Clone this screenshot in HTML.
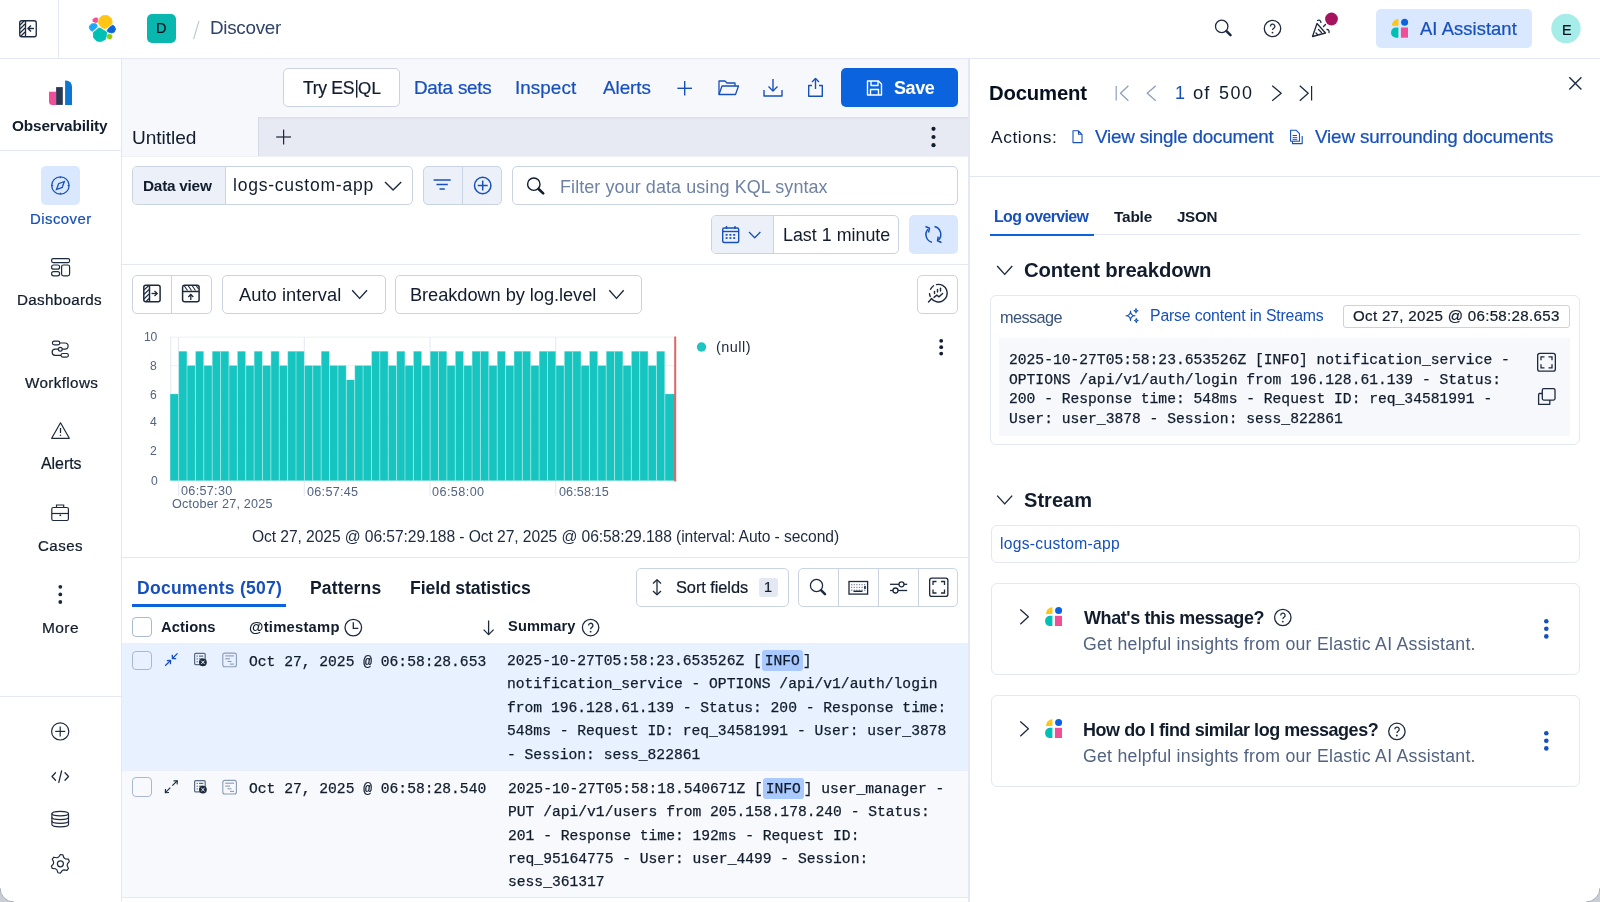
<!DOCTYPE html>
<html><head><meta charset="utf-8"><title>Discover</title>
<style>
html,body{margin:0;padding:0;}
body{width:1600px;height:902px;position:relative;overflow:hidden;background:#fff;font-family:"Liberation Sans",sans-serif;}
.t{position:absolute;white-space:pre;will-change:transform;}
.mk{background:#A9C9FF;border-radius:3px;padding:2.6px 2.9px 2.4px 2.9px;}
svg{position:absolute;left:0;top:0;}
</style></head><body>
<div style="position:absolute;left:0px;top:0px;width:1600px;height:58px;background:#fff;border-radius:0px;box-sizing:border-box;"></div>
<div style="position:absolute;left:0px;top:58px;width:1600px;height:1px;background:#E3E8F2;border-radius:0px;box-sizing:border-box;"></div>
<div style="position:absolute;left:58px;top:0px;width:1px;height:58px;background:#E3E8F2;border-radius:0px;box-sizing:border-box;"></div>
<div style="position:absolute;left:121px;top:59px;width:1px;height:843px;background:#E3E8F2;border-radius:0px;box-sizing:border-box;"></div>
<div style="position:absolute;left:0px;top:150px;width:121px;height:1px;background:#E3E8F2;border-radius:0px;box-sizing:border-box;"></div>
<div style="position:absolute;left:0px;top:696px;width:121px;height:1px;background:#E3E8F2;border-radius:0px;box-sizing:border-box;"></div>
<div style="position:absolute;left:122px;top:59px;width:846px;height:58px;background:#F7F8FC;border-radius:0px;box-sizing:border-box;"></div>
<div style="position:absolute;left:122px;top:117px;width:136px;height:39px;background:#F7F8FC;border-radius:0px;box-sizing:border-box;"></div>
<div style="position:absolute;left:258px;top:117px;width:710px;height:39px;background:#E7EAF3;border-radius:0px;box-sizing:border-box;"></div>
<div style="position:absolute;left:258px;top:117px;width:1px;height:39px;background:#D3DAE6;border-radius:0px;box-sizing:border-box;"></div>
<div style="position:absolute;left:258px;top:117px;width:710px;height:3px;background:linear-gradient(#D8DFEA,rgba(231,235,242,0));border-radius:0px;box-sizing:border-box;"></div>
<div style="position:absolute;left:122px;top:156px;width:846px;height:1px;background:#EEF1F6;border-radius:0px;box-sizing:border-box;"></div>
<div style="position:absolute;left:122px;top:264px;width:846px;height:1px;background:#E3E8F2;border-radius:0px;box-sizing:border-box;"></div>
<div style="position:absolute;left:122px;top:557px;width:846px;height:1px;background:#E3E8F2;border-radius:0px;box-sizing:border-box;"></div>
<div style="position:absolute;left:968px;top:59px;width:2px;height:843px;background:#E3E8F2;border-radius:0px;box-sizing:border-box;"></div>
<div style="position:absolute;left:970px;top:176px;width:630px;height:1px;background:#E3E8F2;border-radius:0px;box-sizing:border-box;"></div>
<div style="position:absolute;left:283px;top:68px;width:117px;height:39px;background:#fff;border:1px solid #CAD3E2;border-radius:5px;box-sizing:border-box;"></div>
<div style="position:absolute;left:841px;top:68px;width:117px;height:39px;background:#0B64DD;border-radius:5px;box-sizing:border-box;"></div>
<div style="position:absolute;left:132px;top:166px;width:281px;height:39px;background:#fff;border:1px solid #CAD3E2;border-radius:5px;box-sizing:border-box;"></div>
<div style="position:absolute;left:133px;top:167px;width:92px;height:37px;background:#ECF1F9;border-radius:4px;box-sizing:border-box;border-radius:4px 0 0 4px;"></div>
<div style="position:absolute;left:225px;top:166px;width:1px;height:39px;background:#CAD3E2;border-radius:0px;box-sizing:border-box;"></div>
<div style="position:absolute;left:423px;top:166px;width:79px;height:39px;background:#ECF1F9;border:1px solid #CAD3E2;border-radius:5px;box-sizing:border-box;"></div>
<div style="position:absolute;left:462px;top:166px;width:1px;height:39px;background:#CAD3E2;border-radius:0px;box-sizing:border-box;"></div>
<div style="position:absolute;left:512px;top:166px;width:446px;height:39px;background:#fff;border:1px solid #CAD3E2;border-radius:5px;box-sizing:border-box;"></div>
<div style="position:absolute;left:711px;top:215px;width:188px;height:39px;background:#fff;border:1px solid #CAD3E2;border-radius:5px;box-sizing:border-box;"></div>
<div style="position:absolute;left:712px;top:216px;width:61px;height:37px;background:#ECF1F9;border-radius:4px;box-sizing:border-box;border-radius:4px 0 0 4px;"></div>
<div style="position:absolute;left:773px;top:215px;width:1px;height:39px;background:#CAD3E2;border-radius:0px;box-sizing:border-box;"></div>
<div style="position:absolute;left:909px;top:215px;width:49px;height:39px;background:#D9E8FF;border-radius:5px;box-sizing:border-box;"></div>
<div style="position:absolute;left:132px;top:275px;width:80px;height:39px;background:#fff;border:1px solid #CAD3E2;border-radius:5px;box-sizing:border-box;"></div>
<div style="position:absolute;left:171px;top:275px;width:1px;height:39px;background:#CAD3E2;border-radius:0px;box-sizing:border-box;"></div>
<div style="position:absolute;left:222px;top:275px;width:164px;height:39px;background:#fff;border:1px solid #CAD3E2;border-radius:5px;box-sizing:border-box;"></div>
<div style="position:absolute;left:395px;top:275px;width:247px;height:39px;background:#fff;border:1px solid #CAD3E2;border-radius:5px;box-sizing:border-box;"></div>
<div style="position:absolute;left:917px;top:275px;width:41px;height:39px;background:#fff;border:1px solid #CAD3E2;border-radius:5px;box-sizing:border-box;"></div>
<div style="position:absolute;left:147px;top:14px;width:29px;height:29px;background:#0AB7AE;border-radius:5px;box-sizing:border-box;"></div>
<div style="position:absolute;left:1376px;top:9px;width:156px;height:39px;background:#D9E8FF;border-radius:5px;box-sizing:border-box;"></div>
<div style="position:absolute;left:41px;top:166px;width:39px;height:39px;background:#D9E8FF;border-radius:5px;box-sizing:border-box;"></div>
<div style="position:absolute;left:636px;top:568px;width:153px;height:39px;background:#fff;border:1px solid #CAD3E2;border-radius:5px;box-sizing:border-box;"></div>
<div style="position:absolute;left:758.6px;top:578px;width:19.1px;height:19.2px;background:#E3E8F2;border-radius:3px;box-sizing:border-box;"></div>
<div style="position:absolute;left:798px;top:568px;width:160px;height:39px;background:#fff;border:1px solid #CAD3E2;border-radius:5px;box-sizing:border-box;"></div>
<div style="position:absolute;left:838px;top:568px;width:1px;height:39px;background:#CAD3E2;border-radius:0px;box-sizing:border-box;"></div>
<div style="position:absolute;left:878px;top:568px;width:1px;height:39px;background:#CAD3E2;border-radius:0px;box-sizing:border-box;"></div>
<div style="position:absolute;left:918px;top:568px;width:1px;height:39px;background:#CAD3E2;border-radius:0px;box-sizing:border-box;"></div>
<div style="position:absolute;left:132px;top:617.4px;width:19.5px;height:19.5px;background:#fff;border:1px solid #A9B8CF;border-radius:4px;box-sizing:border-box;"></div>
<div style="position:absolute;left:122px;top:643px;width:846px;height:127px;background:#E8F1FF;border-radius:0px;box-sizing:border-box;"></div>
<div style="position:absolute;left:122px;top:770px;width:846px;height:1px;background:#EAEFF7;border-radius:0px;box-sizing:border-box;"></div>
<div style="position:absolute;left:122px;top:771px;width:846px;height:126.5px;background:#F7F9FD;border-radius:0px;box-sizing:border-box;"></div>
<div style="position:absolute;left:122px;top:897px;width:846px;height:1px;background:#E3E8F2;border-radius:0px;box-sizing:border-box;"></div>
<div style="position:absolute;left:132px;top:650.6px;width:19.5px;height:19.5px;background:transparent;border:1px solid #A9B8CF;border-radius:4px;box-sizing:border-box;"></div>
<div style="position:absolute;left:132px;top:777.3px;width:19.5px;height:19.5px;background:transparent;border:1px solid #A9B8CF;border-radius:4px;box-sizing:border-box;"></div>
<div style="position:absolute;left:990px;top:234px;width:590px;height:1px;background:#E3E8F2;border-radius:0px;box-sizing:border-box;"></div>
<div style="position:absolute;left:990px;top:233.5px;width:104.4px;height:2.2px;background:#0B64DD;border-radius:0px;box-sizing:border-box;"></div>
<div style="position:absolute;left:132px;top:604.3px;width:153.8px;height:2.5px;background:#0B64DD;border-radius:0px;box-sizing:border-box;"></div>
<div style="position:absolute;left:990px;top:294.8px;width:590px;height:150px;background:#fff;border:1px solid #E3E8F2;border-radius:6px;box-sizing:border-box;"></div>
<div style="position:absolute;left:999.3px;top:338px;width:571px;height:97.8px;background:#F6F8FC;border-radius:0px;box-sizing:border-box;"></div>
<div style="position:absolute;left:1343.4px;top:304.6px;width:227px;height:23px;background:#fff;border:1px solid #CAD3E2;border-radius:3px;box-sizing:border-box;"></div>
<div style="position:absolute;left:990.5px;top:524.7px;width:589.5px;height:38px;background:#fff;border:1px solid #E3E8F2;border-radius:6px;box-sizing:border-box;"></div>
<div style="position:absolute;left:990.5px;top:583.3px;width:589.5px;height:91.4px;background:#fff;border:1px solid #E3E8F2;border-radius:6px;box-sizing:border-box;"></div>
<div style="position:absolute;left:990.5px;top:695.3px;width:589.5px;height:91.4px;background:#fff;border:1px solid #E3E8F2;border-radius:6px;box-sizing:border-box;"></div>
<svg width="1600" height="902" viewBox="0 0 1600 902">
<line x1="170.25" y1="337.10" x2="675" y2="337.10" stroke="#EDF0F6" stroke-width="1"/>
<line x1="170.25" y1="365.60" x2="675" y2="365.60" stroke="#EDF0F6" stroke-width="1"/>
<line x1="170.25" y1="394.10" x2="675" y2="394.10" stroke="#EDF0F6" stroke-width="1"/>
<line x1="170.25" y1="422.60" x2="675" y2="422.60" stroke="#EDF0F6" stroke-width="1"/>
<line x1="170.25" y1="451.10" x2="675" y2="451.10" stroke="#EDF0F6" stroke-width="1"/>
<line x1="170.25" y1="479.60" x2="675" y2="479.60" stroke="#EDF0F6" stroke-width="1"/>
<line x1="170.75" y1="337.1" x2="170.75" y2="479.6" stroke="#E3E8F2" stroke-width="1"/>
<line x1="178.5" y1="337.1" x2="178.5" y2="496" stroke="#E3E8F2" stroke-width="1"/>
<line x1="304.25" y1="337.1" x2="304.25" y2="496" stroke="#E3E8F2" stroke-width="1"/>
<line x1="430.0" y1="337.1" x2="430.0" y2="496" stroke="#E3E8F2" stroke-width="1"/>
<line x1="555.75" y1="337.1" x2="555.75" y2="496" stroke="#E3E8F2" stroke-width="1"/>
<rect x="170.25" y="394.10" width="8.38" height="86.50" fill="#16C5C0"/>
<rect x="178.63" y="351.35" width="8.38" height="129.25" fill="#16C5C0"/>
<rect x="187.02" y="365.60" width="8.38" height="115.00" fill="#16C5C0"/>
<rect x="195.40" y="351.35" width="8.38" height="129.25" fill="#16C5C0"/>
<rect x="203.78" y="365.60" width="8.38" height="115.00" fill="#16C5C0"/>
<rect x="212.16" y="351.35" width="8.38" height="129.25" fill="#16C5C0"/>
<rect x="220.55" y="351.35" width="8.38" height="129.25" fill="#16C5C0"/>
<rect x="228.93" y="365.60" width="8.38" height="115.00" fill="#16C5C0"/>
<rect x="237.31" y="351.35" width="8.38" height="129.25" fill="#16C5C0"/>
<rect x="245.70" y="365.60" width="8.38" height="115.00" fill="#16C5C0"/>
<rect x="254.08" y="351.35" width="8.38" height="129.25" fill="#16C5C0"/>
<rect x="262.46" y="365.60" width="8.38" height="115.00" fill="#16C5C0"/>
<rect x="270.85" y="351.35" width="8.38" height="129.25" fill="#16C5C0"/>
<rect x="279.23" y="365.60" width="8.38" height="115.00" fill="#16C5C0"/>
<rect x="287.61" y="351.35" width="8.38" height="129.25" fill="#16C5C0"/>
<rect x="296.00" y="351.35" width="8.38" height="129.25" fill="#16C5C0"/>
<rect x="304.38" y="365.60" width="8.38" height="115.00" fill="#16C5C0"/>
<rect x="312.76" y="365.60" width="8.38" height="115.00" fill="#16C5C0"/>
<rect x="321.14" y="351.35" width="8.38" height="129.25" fill="#16C5C0"/>
<rect x="329.53" y="365.60" width="8.38" height="115.00" fill="#16C5C0"/>
<rect x="337.91" y="365.60" width="8.38" height="115.00" fill="#16C5C0"/>
<rect x="346.29" y="379.85" width="8.38" height="100.75" fill="#16C5C0"/>
<rect x="354.68" y="365.60" width="8.38" height="115.00" fill="#16C5C0"/>
<rect x="363.06" y="365.60" width="8.38" height="115.00" fill="#16C5C0"/>
<rect x="371.44" y="351.35" width="8.38" height="129.25" fill="#16C5C0"/>
<rect x="379.82" y="351.35" width="8.38" height="129.25" fill="#16C5C0"/>
<rect x="388.21" y="365.60" width="8.38" height="115.00" fill="#16C5C0"/>
<rect x="396.59" y="351.35" width="8.38" height="129.25" fill="#16C5C0"/>
<rect x="404.97" y="365.60" width="8.38" height="115.00" fill="#16C5C0"/>
<rect x="413.36" y="351.35" width="8.38" height="129.25" fill="#16C5C0"/>
<rect x="421.74" y="365.60" width="8.38" height="115.00" fill="#16C5C0"/>
<rect x="430.12" y="351.35" width="8.38" height="129.25" fill="#16C5C0"/>
<rect x="438.51" y="351.35" width="8.38" height="129.25" fill="#16C5C0"/>
<rect x="446.89" y="365.60" width="8.38" height="115.00" fill="#16C5C0"/>
<rect x="455.27" y="351.35" width="8.38" height="129.25" fill="#16C5C0"/>
<rect x="463.65" y="365.60" width="8.38" height="115.00" fill="#16C5C0"/>
<rect x="472.04" y="351.35" width="8.38" height="129.25" fill="#16C5C0"/>
<rect x="480.42" y="351.35" width="8.38" height="129.25" fill="#16C5C0"/>
<rect x="488.80" y="365.60" width="8.38" height="115.00" fill="#16C5C0"/>
<rect x="497.19" y="351.35" width="8.38" height="129.25" fill="#16C5C0"/>
<rect x="505.57" y="365.60" width="8.38" height="115.00" fill="#16C5C0"/>
<rect x="513.95" y="351.35" width="8.38" height="129.25" fill="#16C5C0"/>
<rect x="522.34" y="351.35" width="8.38" height="129.25" fill="#16C5C0"/>
<rect x="530.72" y="365.60" width="8.38" height="115.00" fill="#16C5C0"/>
<rect x="539.10" y="351.35" width="8.38" height="129.25" fill="#16C5C0"/>
<rect x="547.48" y="351.35" width="8.38" height="129.25" fill="#16C5C0"/>
<rect x="555.87" y="365.60" width="8.38" height="115.00" fill="#16C5C0"/>
<rect x="564.25" y="351.35" width="8.38" height="129.25" fill="#16C5C0"/>
<rect x="572.63" y="351.35" width="8.38" height="129.25" fill="#16C5C0"/>
<rect x="581.02" y="365.60" width="8.38" height="115.00" fill="#16C5C0"/>
<rect x="589.40" y="351.35" width="8.38" height="129.25" fill="#16C5C0"/>
<rect x="597.78" y="365.60" width="8.38" height="115.00" fill="#16C5C0"/>
<rect x="606.17" y="351.35" width="8.38" height="129.25" fill="#16C5C0"/>
<rect x="614.55" y="351.35" width="8.38" height="129.25" fill="#16C5C0"/>
<rect x="622.93" y="365.60" width="8.38" height="115.00" fill="#16C5C0"/>
<rect x="631.31" y="351.35" width="8.38" height="129.25" fill="#16C5C0"/>
<rect x="639.70" y="351.35" width="8.38" height="129.25" fill="#16C5C0"/>
<rect x="648.08" y="365.60" width="8.38" height="115.00" fill="#16C5C0"/>
<rect x="656.46" y="351.35" width="8.38" height="129.25" fill="#16C5C0"/>
<rect x="664.85" y="394.10" width="10.15" height="86.50" fill="#16C5C0"/>
<line x1="178.63" y1="351.35" x2="178.63" y2="480.60" stroke="rgba(255,255,255,0.42)" stroke-width="1"/>
<line x1="187.02" y1="351.35" x2="187.02" y2="480.60" stroke="rgba(255,255,255,0.42)" stroke-width="1"/>
<line x1="195.40" y1="351.35" x2="195.40" y2="480.60" stroke="rgba(255,255,255,0.42)" stroke-width="1"/>
<line x1="203.78" y1="351.35" x2="203.78" y2="480.60" stroke="rgba(255,255,255,0.42)" stroke-width="1"/>
<line x1="212.16" y1="351.35" x2="212.16" y2="480.60" stroke="rgba(255,255,255,0.42)" stroke-width="1"/>
<line x1="220.55" y1="351.35" x2="220.55" y2="480.60" stroke="rgba(255,255,255,0.42)" stroke-width="1"/>
<line x1="228.93" y1="351.35" x2="228.93" y2="480.60" stroke="rgba(255,255,255,0.42)" stroke-width="1"/>
<line x1="237.31" y1="351.35" x2="237.31" y2="480.60" stroke="rgba(255,255,255,0.42)" stroke-width="1"/>
<line x1="245.70" y1="351.35" x2="245.70" y2="480.60" stroke="rgba(255,255,255,0.42)" stroke-width="1"/>
<line x1="254.08" y1="351.35" x2="254.08" y2="480.60" stroke="rgba(255,255,255,0.42)" stroke-width="1"/>
<line x1="262.46" y1="351.35" x2="262.46" y2="480.60" stroke="rgba(255,255,255,0.42)" stroke-width="1"/>
<line x1="270.85" y1="351.35" x2="270.85" y2="480.60" stroke="rgba(255,255,255,0.42)" stroke-width="1"/>
<line x1="279.23" y1="351.35" x2="279.23" y2="480.60" stroke="rgba(255,255,255,0.42)" stroke-width="1"/>
<line x1="287.61" y1="351.35" x2="287.61" y2="480.60" stroke="rgba(255,255,255,0.42)" stroke-width="1"/>
<line x1="296.00" y1="351.35" x2="296.00" y2="480.60" stroke="rgba(255,255,255,0.42)" stroke-width="1"/>
<line x1="304.38" y1="351.35" x2="304.38" y2="480.60" stroke="rgba(255,255,255,0.42)" stroke-width="1"/>
<line x1="312.76" y1="365.60" x2="312.76" y2="480.60" stroke="rgba(255,255,255,0.42)" stroke-width="1"/>
<line x1="321.14" y1="351.35" x2="321.14" y2="480.60" stroke="rgba(255,255,255,0.42)" stroke-width="1"/>
<line x1="329.53" y1="351.35" x2="329.53" y2="480.60" stroke="rgba(255,255,255,0.42)" stroke-width="1"/>
<line x1="337.91" y1="365.60" x2="337.91" y2="480.60" stroke="rgba(255,255,255,0.42)" stroke-width="1"/>
<line x1="346.29" y1="365.60" x2="346.29" y2="480.60" stroke="rgba(255,255,255,0.42)" stroke-width="1"/>
<line x1="354.68" y1="365.60" x2="354.68" y2="480.60" stroke="rgba(255,255,255,0.42)" stroke-width="1"/>
<line x1="363.06" y1="365.60" x2="363.06" y2="480.60" stroke="rgba(255,255,255,0.42)" stroke-width="1"/>
<line x1="371.44" y1="351.35" x2="371.44" y2="480.60" stroke="rgba(255,255,255,0.42)" stroke-width="1"/>
<line x1="379.82" y1="351.35" x2="379.82" y2="480.60" stroke="rgba(255,255,255,0.42)" stroke-width="1"/>
<line x1="388.21" y1="351.35" x2="388.21" y2="480.60" stroke="rgba(255,255,255,0.42)" stroke-width="1"/>
<line x1="396.59" y1="351.35" x2="396.59" y2="480.60" stroke="rgba(255,255,255,0.42)" stroke-width="1"/>
<line x1="404.97" y1="351.35" x2="404.97" y2="480.60" stroke="rgba(255,255,255,0.42)" stroke-width="1"/>
<line x1="413.36" y1="351.35" x2="413.36" y2="480.60" stroke="rgba(255,255,255,0.42)" stroke-width="1"/>
<line x1="421.74" y1="351.35" x2="421.74" y2="480.60" stroke="rgba(255,255,255,0.42)" stroke-width="1"/>
<line x1="430.12" y1="351.35" x2="430.12" y2="480.60" stroke="rgba(255,255,255,0.42)" stroke-width="1"/>
<line x1="438.51" y1="351.35" x2="438.51" y2="480.60" stroke="rgba(255,255,255,0.42)" stroke-width="1"/>
<line x1="446.89" y1="351.35" x2="446.89" y2="480.60" stroke="rgba(255,255,255,0.42)" stroke-width="1"/>
<line x1="455.27" y1="351.35" x2="455.27" y2="480.60" stroke="rgba(255,255,255,0.42)" stroke-width="1"/>
<line x1="463.65" y1="351.35" x2="463.65" y2="480.60" stroke="rgba(255,255,255,0.42)" stroke-width="1"/>
<line x1="472.04" y1="351.35" x2="472.04" y2="480.60" stroke="rgba(255,255,255,0.42)" stroke-width="1"/>
<line x1="480.42" y1="351.35" x2="480.42" y2="480.60" stroke="rgba(255,255,255,0.42)" stroke-width="1"/>
<line x1="488.80" y1="351.35" x2="488.80" y2="480.60" stroke="rgba(255,255,255,0.42)" stroke-width="1"/>
<line x1="497.19" y1="351.35" x2="497.19" y2="480.60" stroke="rgba(255,255,255,0.42)" stroke-width="1"/>
<line x1="505.57" y1="351.35" x2="505.57" y2="480.60" stroke="rgba(255,255,255,0.42)" stroke-width="1"/>
<line x1="513.95" y1="351.35" x2="513.95" y2="480.60" stroke="rgba(255,255,255,0.42)" stroke-width="1"/>
<line x1="522.34" y1="351.35" x2="522.34" y2="480.60" stroke="rgba(255,255,255,0.42)" stroke-width="1"/>
<line x1="530.72" y1="351.35" x2="530.72" y2="480.60" stroke="rgba(255,255,255,0.42)" stroke-width="1"/>
<line x1="539.10" y1="351.35" x2="539.10" y2="480.60" stroke="rgba(255,255,255,0.42)" stroke-width="1"/>
<line x1="547.48" y1="351.35" x2="547.48" y2="480.60" stroke="rgba(255,255,255,0.42)" stroke-width="1"/>
<line x1="555.87" y1="351.35" x2="555.87" y2="480.60" stroke="rgba(255,255,255,0.42)" stroke-width="1"/>
<line x1="564.25" y1="351.35" x2="564.25" y2="480.60" stroke="rgba(255,255,255,0.42)" stroke-width="1"/>
<line x1="572.63" y1="351.35" x2="572.63" y2="480.60" stroke="rgba(255,255,255,0.42)" stroke-width="1"/>
<line x1="581.02" y1="351.35" x2="581.02" y2="480.60" stroke="rgba(255,255,255,0.42)" stroke-width="1"/>
<line x1="589.40" y1="351.35" x2="589.40" y2="480.60" stroke="rgba(255,255,255,0.42)" stroke-width="1"/>
<line x1="597.78" y1="351.35" x2="597.78" y2="480.60" stroke="rgba(255,255,255,0.42)" stroke-width="1"/>
<line x1="606.17" y1="351.35" x2="606.17" y2="480.60" stroke="rgba(255,255,255,0.42)" stroke-width="1"/>
<line x1="614.55" y1="351.35" x2="614.55" y2="480.60" stroke="rgba(255,255,255,0.42)" stroke-width="1"/>
<line x1="622.93" y1="351.35" x2="622.93" y2="480.60" stroke="rgba(255,255,255,0.42)" stroke-width="1"/>
<line x1="631.31" y1="351.35" x2="631.31" y2="480.60" stroke="rgba(255,255,255,0.42)" stroke-width="1"/>
<line x1="639.70" y1="351.35" x2="639.70" y2="480.60" stroke="rgba(255,255,255,0.42)" stroke-width="1"/>
<line x1="648.08" y1="351.35" x2="648.08" y2="480.60" stroke="rgba(255,255,255,0.42)" stroke-width="1"/>
<line x1="656.46" y1="351.35" x2="656.46" y2="480.60" stroke="rgba(255,255,255,0.42)" stroke-width="1"/>
<line x1="664.85" y1="351.35" x2="664.85" y2="480.60" stroke="rgba(255,255,255,0.42)" stroke-width="1"/>
<rect x="674.2" y="336.5" width="2" height="145" fill="#E06565"/>
<circle cx="701.5" cy="347" r="4.7" fill="#1CC5BF"/>
<g fill="none" stroke="#1D2A3E" stroke-width="1.35"><rect x="19.75" y="20.75" width="16.5" height="16" rx="2"/><line x1="25.5" y1="21" x2="25.5" y2="36.5"/></g>
<g stroke="#1D2A3E" stroke-width="1.2"><line x1="20" y1="25" x2="24.5" y2="20.5"/><line x1="20" y1="29" x2="25" y2="24"/><line x1="20" y1="33" x2="25" y2="28"/><line x1="21" y1="36" x2="25" y2="32"/></g>
<g fill="none" stroke="#1D2A3E" stroke-width="1.4"><line x1="28.5" y1="28.5" x2="34" y2="28.5"/><polyline points="31,25.5 28,28.5 31,31.5"/></g>
<polygon points="99.2,18.4 102.5,15.7 107.6,15.5 111.4,18.4 112.2,22.6 111.4,24.3 105.5,28.8 101.7,27.5 98.7,23.9 98.7,20.5" fill="#FEC514" stroke="#FEC514" stroke-width="0.8" stroke-linejoin="round"/>
<polygon points="92.8,19.7 94.4,18.1 97.4,17.9 97.4,22.1 96.2,22.5 93.2,21.7" fill="#F04E98" stroke="#F04E98" stroke-width="0.8" stroke-linejoin="round"/>
<polygon points="89.5,26 91.7,23.8 96,23.8 97.4,26 96.6,27.6 92.4,31.3 90.4,30.1 89.3,27.7" fill="#1BA9F5" stroke="#1BA9F5" stroke-width="0.8" stroke-linejoin="round"/>
<polygon points="107.2,30.2 109.4,27.4 112.6,25.2 114.2,26.1 115.6,29 114.2,32.2 111.4,33 107.7,31.8" fill="#0B64DD" stroke="#0B64DD" stroke-width="0.8" stroke-linejoin="round"/>
<polygon points="93.3,32.7 98.6,28.1 100,28.1 106.5,32 106.5,35.3 105.4,39.4 100.8,41.6 96.7,41 93.5,37.4" fill="#00BFB3" stroke="#00BFB3" stroke-width="0.8" stroke-linejoin="round"/>
<polygon points="107.4,35.4 108.5,34.2 111.7,35 112,37 110.9,38.9 109,38.9 107.4,38.1" fill="#93C90E" stroke="#93C90E" stroke-width="0.8" stroke-linejoin="round"/>
<line x1="199" y1="20.8" x2="193.6" y2="39.2" stroke="#B9C4D6" stroke-width="1.1"/>
<rect x="356" y="80" width="1.4" height="17.6" fill="#111C2C"/>
<g fill="none" stroke="#1D2A3E" stroke-width="1.3"><circle cx="1221.7" cy="26.4" r="6.2"/></g><line x1="1226.5" y1="31.2" x2="1230.5" y2="35.2" stroke="#1D2A3E" stroke-width="2.6" stroke-linecap="round"/>
<circle cx="1272.5" cy="28.5" r="8.2" fill="none" stroke="#1D2A3E" stroke-width="1.3"/><path d="M1270.4,26.4 a2.2,2.2 0 1 1 3.3,1.9 c-0.8,0.5 -1.1,0.9 -1.1,1.8" fill="none" stroke="#1D2A3E" stroke-width="1.3"/><circle cx="1272.5" cy="32.6" r="0.9" fill="#1D2A3E"/>
<g fill="none" stroke="#1D2A3E" stroke-width="1.3" stroke-linecap="round" stroke-linejoin="round"><path d="M1312.5,36.5 L1317,23.5 L1325.5,33 Z"/><line x1="1318.5" y1="29.5" x2="1321.5" y2="32.5"/><line x1="1316" y1="33" x2="1317.5" y2="34.5"/><path d="M1317.5,20.5 q2.5,-1.5 3.5,2"/><path d="M1327,29.5 q2.5,0 2,3"/><line x1="1323.5" y1="26.5" x2="1325.5" y2="24.5"/></g>
<circle cx="1331.5" cy="19" r="6.4" fill="#A6125D"/>
<g transform="translate(1391,18.7) scale(1.0)"><path d="M0.9,7 A6.5,6.7 0 0 1 7.4,0.3 V7 Z" fill="#FEC514"/><circle cx="13.6" cy="3.5" r="3.5" fill="#0B64DD"/><path d="M7.4,8.7 H5 A4.9,4.9 0 0 0 0.1,13.6 V14.2 A4.9,4.9 0 0 0 5,19.1 H7.4 Z" fill="#00BFB3"/><rect x="9.9" y="8.8" width="7.1" height="10.2" fill="#F04E98"/></g>
<circle cx="1566" cy="28.5" r="14.7" fill="#A6EDEA"/>
<path d="M49,91.8 H56.1 V104.9 H52.5 A3.5,3.5 0 0 1 49,101.4 Z" fill="#F04E98"/>
<rect x="56.1" y="87.1" width="6.7" height="17.8" fill="#2B3A52"/>
<path d="M65.1,80.5 H66 A6,6 0 0 1 72,86.5 V104.9 H65.1 Z" fill="#0B77D0"/>
<g fill="none" stroke="#1750BA" stroke-width="1.3"><circle cx="60.4" cy="185.5" r="8.7"/><path d="M56.5,189.5 L58.6,183.7 L64.3,181.5 L62.2,187.4 Z"/></g><g stroke="#1750BA" stroke-width="1.1"><line x1="60.4" y1="176.8" x2="60.4" y2="178.3"/><line x1="60.4" y1="192.7" x2="60.4" y2="194.2"/><line x1="51.7" y1="185.5" x2="53.2" y2="185.5"/><line x1="67.6" y1="185.5" x2="69.1" y2="185.5"/></g>
<g fill="none" stroke="#1D2A3E" stroke-width="1.2"><rect x="51.6" y="258.6" width="18" height="4" rx="1.5"/><rect x="51.6" y="265" width="8" height="4.2" rx="2"/><rect x="51.6" y="271.6" width="8" height="4.2" rx="2"/><rect x="61.6" y="265" width="8" height="10.8" rx="1.8"/></g>
<g fill="none" stroke="#1D2A3E" stroke-width="1.2"><rect x="52.4" y="341.2" width="7.4" height="3.6" rx="1.8"/><path d="M59.8,343 H65 A2.9,2.9 0 0 1 65,349.2 H62.3"/><circle cx="60.3" cy="349.2" r="1.9"/><path d="M58.4,349.2 H55.2 A2.9,2.9 0 0 0 55.2,355.3 H61"/><rect x="61" y="353.5" width="7.4" height="3.6" rx="1.8"/></g>
<g fill="none" stroke="#1D2A3E" stroke-width="1.2" stroke-linejoin="round"><path d="M60.5,422.8 L69.3,438.3 H51.7 Z"/></g><line x1="60.5" y1="428" x2="60.5" y2="433" stroke="#1D2A3E" stroke-width="1.3"/><circle cx="60.5" cy="435.3" r="0.8" fill="#1D2A3E"/>
<g fill="none" stroke="#1D2A3E" stroke-width="1.2"><rect x="51.8" y="507.5" width="16.6" height="13" rx="1.5"/><path d="M56.5,507.5 V505 H63.7 V507.5"/><line x1="51.8" y1="513.5" x2="68.4" y2="513.5"/></g><rect x="59.5" y="514.5" width="1.6" height="1.6" fill="#1D2A3E"/>
<circle cx="60.3" cy="586.80" r="1.9" fill="#1D2A3E"/><circle cx="60.3" cy="594.40" r="1.9" fill="#1D2A3E"/><circle cx="60.3" cy="602.00" r="1.9" fill="#1D2A3E"/>
<g fill="none" stroke="#1D2A3E" stroke-width="1.2"><circle cx="60.2" cy="731.4" r="8.6"/><line x1="60.2" y1="726.4" x2="60.2" y2="736.4"/><line x1="55.2" y1="731.4" x2="65.2" y2="731.4"/></g>
<g fill="none" stroke="#1D2A3E" stroke-width="1.3" stroke-linecap="round" stroke-linejoin="round"><polyline points="55.5,772.8 52,776.5 55.5,780.2"/><polyline points="65,772.8 68.5,776.5 65,780.2"/><line x1="61.6" y1="770.8" x2="58.8" y2="782.3"/></g>
<g fill="none" stroke="#1D2A3E" stroke-width="1.2"><ellipse cx="60.2" cy="813.6" rx="8.3" ry="2.3"/><path d="M51.9,813.6 V824.6 A8.3,2.3 0 0 0 68.5,824.6 V813.6"/><path d="M51.9,817.3 A8.3,2.3 0 0 0 68.5,817.3"/><path d="M51.9,821 A8.3,2.3 0 0 0 68.5,821"/></g>
<polygon points="60.40,854.50 62.81,854.82 63.90,857.74 65.35,858.85 68.45,859.15 69.38,861.39 67.40,863.80 67.16,865.61 68.45,868.45 66.98,870.38 63.90,869.86 62.21,870.56 60.40,873.10 57.99,872.78 56.90,869.86 55.45,868.75 52.35,868.45 51.42,866.21 53.40,863.80 53.64,861.99 52.35,859.15 53.82,857.22 56.90,857.74 58.59,857.04" fill="none" stroke="#1D2A3E" stroke-width="1.2" stroke-linejoin="round"/><circle cx="60.4" cy="863.8" r="3" fill="none" stroke="#1D2A3E" stroke-width="1.2"/>
<g fill="none" stroke="#1750BA" stroke-width="1.4"><line x1="684.7" y1="81" x2="684.7" y2="95.6"/><line x1="677.4" y1="88.3" x2="692" y2="88.3"/></g>
<g fill="none" stroke="#1750BA" stroke-width="1.3" stroke-linejoin="round"><path d="M719,94.5 V81 H725 L727,83 H735 V86"/><path d="M719,94.5 L722,86 H738.5 L735.5,94.5 Z"/></g>
<g fill="none" stroke="#1750BA" stroke-width="1.4" stroke-linejoin="round"><line x1="773" y1="79" x2="773" y2="91"/><polyline points="768.5,86.5 773,91 777.5,86.5"/><path d="M764,90 V96 H782 V90"/></g>
<g fill="none" stroke="#1750BA" stroke-width="1.4" stroke-linejoin="round"><line x1="815.5" y1="78.5" x2="815.5" y2="89"/><polyline points="812,82 815.5,78.5 819,82"/><path d="M812,85.5 H808.7 V96.3 H822.3 V85.5 H819"/></g>
<g fill="none" stroke="#fff" stroke-width="1.4" stroke-linejoin="round"><path d="M867.5,81 H878.5 L881.5,84 V95 H867.5 Z"/><path d="M871,81 V85.5 H878 V81"/><path d="M870.5,95 V89.5 H878.5 V95"/></g>
<g stroke="#1D2A3E" stroke-width="1.25"><line x1="283.6" y1="129.6" x2="283.6" y2="144.5"/><line x1="276.2" y1="137" x2="291" y2="137"/></g>
<circle cx="933.5" cy="128.80" r="2.1" fill="#111C2C"/><circle cx="933.5" cy="137.00" r="2.1" fill="#111C2C"/><circle cx="933.5" cy="145.20" r="2.1" fill="#111C2C"/>
<polyline points="385,182 393.1,190 401.2,182" fill="none" stroke="#1D2A3E" stroke-width="1.4" stroke-linejoin="round"/>
<g stroke="#1750BA" stroke-width="1.5"><line x1="433.6" y1="180" x2="450.7" y2="180"/><line x1="436.5" y1="184.5" x2="447.8" y2="184.5"/><line x1="439.5" y1="189" x2="444.8" y2="189"/></g>
<g fill="none" stroke="#1750BA" stroke-width="1.5"><circle cx="482.7" cy="185.5" r="8.2"/><line x1="482.7" y1="180.5" x2="482.7" y2="190.5"/><line x1="477.7" y1="185.5" x2="487.7" y2="185.5"/></g>
<circle cx="533.8" cy="184.2" r="6.2" fill="none" stroke="#111C2C" stroke-width="1.4"/><line x1="538.6" y1="189" x2="543.2" y2="193.4" stroke="#111C2C" stroke-width="2.6" stroke-linecap="round"/>
<g fill="none" stroke="#1750BA" stroke-width="1.4"><rect x="722.7" y="228" width="16" height="14.5" rx="1.5"/><line x1="722.7" y1="231.5" x2="738.7" y2="231.5"/><line x1="726.5" y1="226" x2="726.5" y2="229"/><line x1="735" y1="226" x2="735" y2="229"/></g>
<rect x="725.60" y="234.00" width="2" height="1.7" fill="#1750BA"/><rect x="725.60" y="237.20" width="2" height="1.7" fill="#1750BA"/><rect x="729.40" y="234.00" width="2" height="1.7" fill="#1750BA"/><rect x="729.40" y="237.20" width="2" height="1.7" fill="#1750BA"/><rect x="733.20" y="234.00" width="2" height="1.7" fill="#1750BA"/><rect x="733.20" y="237.20" width="2" height="1.7" fill="#1750BA"/>
<polyline points="749,232 754.7,237.7 760.4,232" fill="none" stroke="#1750BA" stroke-width="1.3" stroke-linejoin="round"/>
<g fill="none" stroke="#1750BA" stroke-width="1.5" stroke-linejoin="round"><path d="M928,229.2 A8,8 0 0 0 932,242.3"/><path d="M938.5,240 A8,8 0 0 0 934.5,226.6"/><polyline points="925.5,226.5 929.5,228.3 928.5,232.5"/><polyline points="941.5,242.5 937.5,240.7 938.2,236.7"/></g>
<g fill="none" stroke="#1D2A3E" stroke-width="1.5"><rect x="143.8" y="285.2" width="16.3" height="16.5" rx="2"/><line x1="149.5" y1="285.5" x2="149.5" y2="301.5"/></g>
<g stroke="#1D2A3E" stroke-width="1.1"><line x1="144" y1="290" x2="148.8" y2="285.5"/><line x1="144" y1="294.5" x2="149" y2="289.5"/><line x1="144" y1="299" x2="149" y2="294"/><line x1="146" y1="301.5" x2="149" y2="298.5"/></g>
<g fill="none" stroke="#1D2A3E" stroke-width="1.3"><line x1="151.5" y1="293.5" x2="157" y2="293.5"/><polyline points="154.5,291 157.2,293.5 154.5,296"/></g>
<g fill="none" stroke="#1D2A3E" stroke-width="1.5"><rect x="182.6" y="285.2" width="16.5" height="16.5" rx="2"/><line x1="183" y1="291.5" x2="199" y2="291.5"/></g>
<g stroke="#1D2A3E" stroke-width="1.1"><line x1="184" y1="285.5" x2="187.5" y2="290.5"/><line x1="188" y1="285.5" x2="191.5" y2="290.5"/><line x1="192" y1="285.5" x2="195.5" y2="290.5"/><line x1="196" y1="285.5" x2="198.5" y2="289"/></g>
<g fill="none" stroke="#1D2A3E" stroke-width="1.3"><line x1="190.8" y1="294.5" x2="190.8" y2="300"/><polyline points="188.3,297 190.8,294.5 193.3,297"/></g>
<polyline points="352.2,290.2 359.6,298.4 367,290.2" fill="none" stroke="#1D2A3E" stroke-width="1.4" stroke-linejoin="round"/>
<polyline points="609.3,290.2 616.5,298.4 623.7,290.2" fill="none" stroke="#1D2A3E" stroke-width="1.4" stroke-linejoin="round"/>
<g fill="none" stroke="#1D2A3E" stroke-width="1.4" stroke-linecap="round"><path d="M936.5,284.6 A8.8,8.8 0 1 1 931.4,298.5"/><path d="M930.6,289.3 A8.8,8.8 0 0 1 933.5,285.8"/><path d="M929.5,293.6 A8.8,8.8 0 0 0 930.2,296.5"/><line x1="931.5" y1="298.8" x2="928.5" y2="302"/><polyline points="934,297.4 936.8,295.2 939,296.8 942.6,293.5"/><line x1="934.5" y1="291.5" x2="934.5" y2="293.5"/><line x1="937.5" y1="289.5" x2="937.5" y2="292"/><line x1="940.5" y1="288.2" x2="940.5" y2="291"/></g>
<circle cx="941.2" cy="340.80" r="1.9" fill="#111C2C"/><circle cx="941.2" cy="347.20" r="1.9" fill="#111C2C"/><circle cx="941.2" cy="353.60" r="1.9" fill="#111C2C"/>
<g fill="none" stroke="#1D2A3E" stroke-width="1.3" stroke-linejoin="round"><line x1="657" y1="580" x2="657" y2="594.5"/><polyline points="653,583.5 657,579.7 661,583.5"/><polyline points="653,591 657,594.8 661,591"/></g>
<circle cx="816.5" cy="585.5" r="6.1" fill="none" stroke="#1D2A3E" stroke-width="1.3"/><line x1="821.2" y1="590.3" x2="825" y2="594.2" stroke="#1D2A3E" stroke-width="2.5" stroke-linecap="round"/>
<rect x="849" y="581.5" width="18.6" height="12.6" fill="none" stroke="#1D2A3E" stroke-width="1.3"/>
<rect x="851.0" y="584.0" width="1.3" height="1.3" fill="#8591A5"/><rect x="851.0" y="586.8" width="1.3" height="1.3" fill="#8591A5"/><rect x="851.0" y="589.6" width="1.3" height="1.3" fill="#8591A5"/><rect x="853.6" y="584.0" width="1.3" height="1.3" fill="#8591A5"/><rect x="853.6" y="586.8" width="1.3" height="1.3" fill="#8591A5"/><rect x="853.6" y="589.6" width="1.3" height="1.3" fill="#8591A5"/><rect x="856.2" y="584.0" width="1.3" height="1.3" fill="#8591A5"/><rect x="856.2" y="586.8" width="1.3" height="1.3" fill="#8591A5"/><rect x="856.2" y="589.6" width="1.3" height="1.3" fill="#8591A5"/><rect x="858.8" y="584.0" width="1.3" height="1.3" fill="#8591A5"/><rect x="858.8" y="586.8" width="1.3" height="1.3" fill="#8591A5"/><rect x="858.8" y="589.6" width="1.3" height="1.3" fill="#8591A5"/><rect x="861.4" y="584.0" width="1.3" height="1.3" fill="#8591A5"/><rect x="861.4" y="586.8" width="1.3" height="1.3" fill="#8591A5"/><rect x="861.4" y="589.6" width="1.3" height="1.3" fill="#8591A5"/><rect x="864.0" y="584.0" width="1.3" height="1.3" fill="#8591A5"/><rect x="864.0" y="586.8" width="1.3" height="1.3" fill="#8591A5"/><rect x="864.0" y="589.6" width="1.3" height="1.3" fill="#8591A5"/><rect x="853.5" y="590.6" width="9" height="1.4" fill="#1D2A3E"/><rect x="864.2" y="586" width="1.6" height="3" fill="#1D2A3E"/>
<g fill="none" stroke="#1D2A3E" stroke-width="1.3"><line x1="890" y1="584.3" x2="907.2" y2="584.3"/><line x1="890" y1="590.5" x2="907.2" y2="590.5"/></g><circle cx="901.5" cy="584.3" r="2.5" fill="#fff" stroke="#1D2A3E" stroke-width="1.3"/><circle cx="895.5" cy="590.5" r="2.5" fill="#fff" stroke="#1D2A3E" stroke-width="1.3"/>
<rect x="929.65" y="578.15" width="18.2" height="18.2" rx="2.2" fill="none" stroke="#1D2A3E" stroke-width="1.3"/><g fill="none" stroke="#1D2A3E" stroke-width="1.3"><polyline points="933,585.0 933,581.5 936.5,581.5"/><polyline points="941.0,581.5 944.5,581.5 944.5,585.0"/><polyline points="933,589.5 933,593.0 936.5,593.0"/><polyline points="941.0,593.0 944.5,593.0 944.5,589.5"/></g>
<circle cx="353.3" cy="627.6" r="8.3" fill="none" stroke="#1D2A3E" stroke-width="1.3"/><polyline points="353.3,622.3 353.3,628.3 358.3,628.3" fill="none" stroke="#1D2A3E" stroke-width="1.3"/>
<g fill="none" stroke="#1D2A3E" stroke-width="1.3" stroke-linejoin="round"><line x1="488.6" y1="620.5" x2="488.6" y2="634.6"/><polyline points="483.6,629.6 488.6,634.6 493.6,629.6"/></g>
<circle cx="590.6" cy="627.6" r="8.2" fill="none" stroke="#1D2A3E" stroke-width="1.3"/><path d="M588.5,625.5 a2.2,2.2 0 1 1 3.3,1.9 c-0.8,0.5 -1.1,0.9 -1.1,1.8" fill="none" stroke="#1D2A3E" stroke-width="1.3"/><circle cx="590.6" cy="631.7" r="0.9" fill="#1D2A3E"/>
<g fill="none" stroke="#1750BA" stroke-width="1.3" stroke-linejoin="round"><line x1="165.2" y1="665.8" x2="170.6" y2="660.4"/><polyline points="166.8,660.6 170.6,660.4 170.4,664.2"/><line x1="177.5" y1="653.4" x2="172.4" y2="658.5"/><polyline points="176.2,658.6 172.4,658.5 172.3,654.7"/></g><rect x="194.6" y="653.4" width="10.6" height="11.2" rx="1" fill="none" stroke="#5A6A84" stroke-width="1.2"/><rect x="196.6" y="655.5" width="1.2" height="1.2" fill="#5A6A84"/><rect x="199" y="655.5" width="4.3" height="1.2" fill="#5A6A84"/><rect x="196.6" y="658.3" width="1.2" height="1.2" fill="#5A6A84"/><rect x="199" y="658.3" width="4.3" height="1.2" fill="#5A6A84"/><rect x="196.6" y="661.1" width="1.2" height="1.2" fill="#5A6A84"/><rect x="199" y="661.1" width="4.3" height="1.2" fill="#5A6A84"/><circle cx="202.9" cy="662.3" r="3.9" fill="#1D2A3E"/><g stroke="#fff" stroke-width="1"><line x1="201.3" y1="660.7" x2="204.5" y2="663.9"/><line x1="204.5" y1="660.7" x2="201.3" y2="663.9"/></g><rect x="222.8" y="653.1" width="13.6" height="13.6" rx="2" fill="none" stroke="#8A9BB8" stroke-width="1.1"/><g stroke="#8A9BB8" stroke-width="1.1"><line x1="225.2" y1="655.9" x2="234" y2="655.9"/><line x1="225.2" y1="658.8" x2="230" y2="658.8"/><line x1="227.5" y1="661.5" x2="231.5" y2="661.5"/><line x1="230" y1="664.1" x2="234" y2="664.1"/></g>
<g fill="none" stroke="#1D2A3E" stroke-width="1.15" stroke-linejoin="round"><line x1="165.4" y1="792.5999999999999" x2="170.3" y2="787.6999999999999"/><line x1="172.3" y1="785.6999999999999" x2="177.2" y2="780.8"/><polyline points="165.5,789.0 165.3,792.6999999999999 169,792.5"/><polyline points="173.6,780.9 177.3,780.6999999999999 177.1,784.4"/></g><rect x="194.6" y="780.6999999999999" width="10.6" height="11.2" rx="1" fill="none" stroke="#5A6A84" stroke-width="1.2"/><rect x="196.6" y="782.8" width="1.2" height="1.2" fill="#5A6A84"/><rect x="199" y="782.8" width="4.3" height="1.2" fill="#5A6A84"/><rect x="196.6" y="785.6" width="1.2" height="1.2" fill="#5A6A84"/><rect x="199" y="785.6" width="4.3" height="1.2" fill="#5A6A84"/><rect x="196.6" y="788.4" width="1.2" height="1.2" fill="#5A6A84"/><rect x="199" y="788.4" width="4.3" height="1.2" fill="#5A6A84"/><circle cx="202.9" cy="789.5999999999999" r="3.9" fill="#1D2A3E"/><g stroke="#fff" stroke-width="1"><line x1="201.3" y1="788.0" x2="204.5" y2="791.1999999999999"/><line x1="204.5" y1="788.0" x2="201.3" y2="791.1999999999999"/></g><rect x="222.8" y="780.4" width="13.6" height="13.6" rx="2" fill="none" stroke="#8A9BB8" stroke-width="1.1"/><g stroke="#8A9BB8" stroke-width="1.1"><line x1="225.2" y1="783.1999999999999" x2="234" y2="783.1999999999999"/><line x1="225.2" y1="786.0999999999999" x2="230" y2="786.0999999999999"/><line x1="227.5" y1="788.8" x2="231.5" y2="788.8"/><line x1="230" y1="791.4" x2="234" y2="791.4"/></g>
<line x1="1116.2" y1="86" x2="1116.2" y2="100.5" stroke="#8E9FBB" stroke-width="1.2"/><polyline points="1128.4,85.8 1120.5,93.3 1128.4,100.8" fill="none" stroke="#8E9FBB" stroke-width="1.3" stroke-linejoin="round"/>
<polyline points="1155.8,85.8 1147.2,93.3 1155.8,100.8" fill="none" stroke="#8E9FBB" stroke-width="1.3" stroke-linejoin="round"/>
<polyline points="1272.2,85.8 1281.2,93.3 1272.2,100.8" fill="none" stroke="#1D2A3E" stroke-width="1.3" stroke-linejoin="round"/>
<polyline points="1299.8,85.8 1308.2,93.3 1299.8,100.8" fill="none" stroke="#1D2A3E" stroke-width="1.3" stroke-linejoin="round"/><line x1="1311.6" y1="86" x2="1311.6" y2="100.5" stroke="#1D2A3E" stroke-width="1.2"/>
<g stroke="#1D2A3E" stroke-width="1.4"><line x1="1569.3" y1="77.2" x2="1581.4" y2="89.4"/><line x1="1581.4" y1="77.2" x2="1569.3" y2="89.4"/></g>
<path d="M1073,130.8 H1078.5 L1082,134.3 V142.6 H1073 Z M1078.5,130.8 V134.3 H1082" fill="none" stroke="#1750BA" stroke-width="1.1" stroke-linejoin="round"/>
<g fill="none" stroke="#1750BA" stroke-width="1.1" stroke-linejoin="round"><path d="M1290.6,130.2 H1296 L1299.5,133.7 V141.2 H1290.6 Z"/><path d="M1292.5,141.2 V143.6 H1302.2 V136"/></g><g stroke="#1750BA" stroke-width="1"><line x1="1292.6" y1="135.5" x2="1297" y2="135.5"/><line x1="1292.6" y1="137.7" x2="1297.3" y2="137.7"/><line x1="1292.6" y1="139.7" x2="1297.3" y2="139.7"/></g>
<polyline points="997.2,266 1004.7,274.4 1012.2,266" fill="none" stroke="#1D2A3E" stroke-width="1.4" stroke-linejoin="round"/>
<polyline points="997.2,495.6 1004.7,503.9 1012.2,495.6" fill="none" stroke="#1D2A3E" stroke-width="1.4" stroke-linejoin="round"/>
<g fill="none" stroke="#1750BA" stroke-width="1.1" stroke-linejoin="round"><path d="M1130.5,311 Q1130.5,315.5 1126,315.8 Q1130.5,316.1 1130.5,320.5 Q1130.5,316.1 1135,315.8 Q1130.5,315.5 1130.5,311 Z"/><path d="M1136,308.6 Q1136,310.6 1134,310.8 Q1136,311 1136,313 Q1136,311 1138,310.8 Q1136,310.6 1136,308.6 Z"/><path d="M1136.3,318.5 Q1136.3,320.3 1134.5,320.5 Q1136.3,320.7 1136.3,322.5 Q1136.3,320.7 1138.1,320.5 Q1136.3,320.3 1136.3,318.5 Z"/></g>
<rect x="1537.65" y="353.45" width="17.7" height="17.7" rx="2.2" fill="none" stroke="#1D2A3E" stroke-width="1.3"/><g fill="none" stroke="#1D2A3E" stroke-width="1.3"><polyline points="1541,360.3 1541,356.8 1544.5,356.8"/><polyline points="1548.5,356.8 1552,356.8 1552,360.3"/><polyline points="1541,364.3 1541,367.8 1544.5,367.8"/><polyline points="1548.5,367.8 1552,367.8 1552,364.3"/></g>
<g fill="none" stroke="#1D2A3E" stroke-width="1.3" stroke-linejoin="round"><rect x="1542.3" y="388.6" width="12.7" height="11.5" rx="1.5"/><path d="M1542.3,393.5 H1539.2 A1,1 0 0 0 1538.6,394.5 V404.3 H1549.8 V400.1"/></g>
<polyline points="1020.3,609.5 1028.4,616.85 1020.3,624.2" fill="none" stroke="#1D2A3E" stroke-width="1.3" stroke-linejoin="round"/>
<g transform="translate(1045,607) scale(1.0)"><path d="M0.9,7 A6.5,6.7 0 0 1 7.4,0.3 V7 Z" fill="#FEC514"/><circle cx="13.6" cy="3.5" r="3.5" fill="#0B64DD"/><path d="M7.4,8.7 H5 A4.9,4.9 0 0 0 0.1,13.6 V14.2 A4.9,4.9 0 0 0 5,19.1 H7.4 Z" fill="#00BFB3"/><rect x="9.9" y="8.8" width="7.1" height="10.2" fill="#F04E98"/></g>
<circle cx="1546.3" cy="621.20" r="2.3" fill="#1750BA"/><circle cx="1546.3" cy="628.80" r="2.3" fill="#1750BA"/><circle cx="1546.3" cy="636.40" r="2.3" fill="#1750BA"/>
<polyline points="1020.3,721.5 1028.4,728.85 1020.3,736.2" fill="none" stroke="#1D2A3E" stroke-width="1.3" stroke-linejoin="round"/>
<g transform="translate(1045,719) scale(1.0)"><path d="M0.9,7 A6.5,6.7 0 0 1 7.4,0.3 V7 Z" fill="#FEC514"/><circle cx="13.6" cy="3.5" r="3.5" fill="#0B64DD"/><path d="M7.4,8.7 H5 A4.9,4.9 0 0 0 0.1,13.6 V14.2 A4.9,4.9 0 0 0 5,19.1 H7.4 Z" fill="#00BFB3"/><rect x="9.9" y="8.8" width="7.1" height="10.2" fill="#F04E98"/></g>
<circle cx="1546.3" cy="733.20" r="2.3" fill="#1750BA"/><circle cx="1546.3" cy="740.80" r="2.3" fill="#1750BA"/><circle cx="1546.3" cy="748.40" r="2.3" fill="#1750BA"/>
<circle cx="1282.8" cy="617.5" r="8.2" fill="none" stroke="#1D2A3E" stroke-width="1.3"/><path d="M1280.7,615.4 a2.2,2.2 0 1 1 3.3,1.9 c-0.8,0.5 -1.1,0.9 -1.1,1.8" fill="none" stroke="#1D2A3E" stroke-width="1.3"/><circle cx="1282.8" cy="621.6" r="0.9" fill="#1D2A3E"/>
<circle cx="1396.9" cy="731.4" r="8.2" fill="none" stroke="#1D2A3E" stroke-width="1.3"/><path d="M1394.8000000000002,729.3 a2.2,2.2 0 1 1 3.3,1.9 c-0.8,0.5 -1.1,0.9 -1.1,1.8" fill="none" stroke="#1D2A3E" stroke-width="1.3"/><circle cx="1396.9" cy="735.5" r="0.9" fill="#1D2A3E"/>
<path d="M0,888 A14,14 0 0 0 14,902 H0 Z" fill="#C9CDD5"/>
<path d="M0,888 A14,14 0 0 0 14,902" fill="none" stroke="#A7ADB8" stroke-width="1"/>
<path d="M1600,888 A14,14 0 0 1 1586,902 H1600 Z" fill="#C9CDD5"/>
<path d="M1600,888 A14,14 0 0 1 1586,902" fill="none" stroke="#A7ADB8" stroke-width="1"/>
</svg>
<div class="t" style="left:155.53px;top:21.18px;font:500 14.49px/14.49px 'Liberation Sans',sans-serif;letter-spacing:0.000px;color:#07101F;-webkit-text-stroke:0.22px currentColor;">D</div>
<div class="t" style="left:209.87px;top:19.49px;font:400 18.84px/18.84px 'Liberation Sans',sans-serif;letter-spacing:-0.286px;color:#2F4366;">Discover</div>
<div class="t" style="left:1419.90px;top:20.16px;font:500 18.41px/18.41px 'Liberation Sans',sans-serif;letter-spacing:0.055px;color:#1750BA;-webkit-text-stroke:0.22px currentColor;">AI Assistant</div>
<div class="t" style="left:1561.64px;top:22.60px;font:500 14.35px/14.35px 'Liberation Sans',sans-serif;letter-spacing:0.000px;color:#07101F;-webkit-text-stroke:0.22px currentColor;">E</div>
<div class="t" style="left:12.48px;top:117.94px;font:700 15.36px/15.36px 'Liberation Sans',sans-serif;letter-spacing:-0.150px;color:#111C2C;">Observability</div>
<div class="t" style="left:29.50px;top:212.01px;font:500 14.93px/14.93px 'Liberation Sans',sans-serif;letter-spacing:0.457px;color:#1750BA;-webkit-text-stroke:0.22px currentColor;">Discover</div>
<div class="t" style="left:17.49px;top:292.07px;font:500 15.22px/15.22px 'Liberation Sans',sans-serif;letter-spacing:0.289px;color:#111C2C;-webkit-text-stroke:0.22px currentColor;">Dashboards</div>
<div class="t" style="left:24.59px;top:374.57px;font:500 15.22px/15.22px 'Liberation Sans',sans-serif;letter-spacing:0.375px;color:#111C2C;-webkit-text-stroke:0.22px currentColor;">Workflows</div>
<div class="t" style="left:40.64px;top:456.45px;font:500 15.94px/15.94px 'Liberation Sans',sans-serif;letter-spacing:-0.040px;color:#111C2C;-webkit-text-stroke:0.22px currentColor;">Alerts</div>
<div class="t" style="left:37.80px;top:538.19px;font:500 15.07px/15.07px 'Liberation Sans',sans-serif;letter-spacing:0.450px;color:#111C2C;-webkit-text-stroke:0.22px currentColor;">Cases</div>
<div class="t" style="left:42.07px;top:620.42px;font:500 15.51px/15.51px 'Liberation Sans',sans-serif;letter-spacing:0.400px;color:#111C2C;-webkit-text-stroke:0.22px currentColor;">More</div>
<div class="t" style="left:302.69px;top:80.23px;font:500 17.60px/17.60px 'Liberation Sans',sans-serif;letter-spacing:-0.340px;color:#111C2C;-webkit-text-stroke:0.22px currentColor;">Try ES</div>
<div class="t" style="left:358.49px;top:80.23px;font:500 17.00px/17.00px 'Liberation Sans',sans-serif;letter-spacing:0.300px;color:#111C2C;-webkit-text-stroke:0.22px currentColor;">QL</div>
<div class="t" style="left:414.37px;top:78.99px;font:500 18.84px/18.84px 'Liberation Sans',sans-serif;letter-spacing:-0.225px;color:#1750BA;-webkit-text-stroke:0.22px currentColor;">Data sets</div>
<div class="t" style="left:514.87px;top:78.99px;font:500 18.84px/18.84px 'Liberation Sans',sans-serif;letter-spacing:0.067px;color:#1750BA;-webkit-text-stroke:0.22px currentColor;">Inspect</div>
<div class="t" style="left:602.57px;top:78.79px;font:500 18.84px/18.84px 'Liberation Sans',sans-serif;letter-spacing:-0.040px;color:#1750BA;-webkit-text-stroke:0.22px currentColor;">Alerts</div>
<div class="t" style="left:894.03px;top:79.09px;font:600 18.00px/18.00px 'Liberation Sans',sans-serif;letter-spacing:-0.400px;color:#FFFFFF;">Save</div>
<div class="t" style="left:132.05px;top:127.54px;font:400 19.13px/19.13px 'Liberation Sans',sans-serif;letter-spacing:-0.057px;color:#111C2C;">Untitled</div>
<div class="t" style="left:143.28px;top:177.94px;font:600 15.36px/15.36px 'Liberation Sans',sans-serif;letter-spacing:-0.250px;color:#111C2C;">Data view</div>
<div class="t" style="left:233.25px;top:177.09px;font:400 17.54px/17.54px 'Liberation Sans',sans-serif;letter-spacing:0.757px;color:#111C2C;">logs-custom-app</div>
<div class="t" style="left:559.92px;top:178.52px;font:400 17.97px/17.97px 'Liberation Sans',sans-serif;letter-spacing:0.088px;color:#6F82A3;">Filter your data using KQL syntax</div>
<div class="t" style="left:783.03px;top:226.65px;font:400 17.83px/17.83px 'Liberation Sans',sans-serif;letter-spacing:0.017px;color:#111C2C;">Last 1 minute</div>
<div class="t" style="left:238.50px;top:285.88px;font:400 18.26px/18.26px 'Liberation Sans',sans-serif;letter-spacing:0.067px;color:#111C2C;">Auto interval</div>
<div class="t" style="left:410.20px;top:285.88px;font:400 18.26px/18.26px 'Liberation Sans',sans-serif;letter-spacing:-0.067px;color:#111C2C;">Breakdown by log.level</div>
<div class="t" style="left:716.43px;top:339.68px;font:400 14.49px/14.49px 'Liberation Sans',sans-serif;letter-spacing:0.480px;color:#1D2A3E;">(null)</div>
<div class="t" style="left:143.52px;top:330.75px;font:400 12.17px/12.17px 'Liberation Sans',sans-serif;letter-spacing:-0.300px;color:#516381;">10</div>
<div class="t" style="left:149.67px;top:360.05px;font:400 12.17px/12.17px 'Liberation Sans',sans-serif;letter-spacing:0.000px;color:#516381;">8</div>
<div class="t" style="left:149.67px;top:388.55px;font:400 12.17px/12.17px 'Liberation Sans',sans-serif;letter-spacing:0.000px;color:#516381;">6</div>
<div class="t" style="left:150.07px;top:416.35px;font:400 12.17px/12.17px 'Liberation Sans',sans-serif;letter-spacing:0.000px;color:#516381;">4</div>
<div class="t" style="left:149.67px;top:445.35px;font:400 12.17px/12.17px 'Liberation Sans',sans-serif;letter-spacing:0.000px;color:#516381;">2</div>
<div class="t" style="left:150.87px;top:475.05px;font:400 12.17px/12.17px 'Liberation Sans',sans-serif;letter-spacing:0.000px;color:#516381;">0</div>
<div class="t" style="left:181.24px;top:485.48px;font:400 12.61px/12.61px 'Liberation Sans',sans-serif;letter-spacing:0.307px;color:#516381;">06:57:30</div>
<div class="t" style="left:307.24px;top:485.68px;font:400 12.61px/12.61px 'Liberation Sans',sans-serif;letter-spacing:0.286px;color:#516381;">06:57:45</div>
<div class="t" style="left:432.44px;top:485.68px;font:400 12.61px/12.61px 'Liberation Sans',sans-serif;letter-spacing:0.429px;color:#516381;">06:58:00</div>
<div class="t" style="left:559.04px;top:485.68px;font:400 12.61px/12.61px 'Liberation Sans',sans-serif;letter-spacing:0.086px;color:#516381;">06:58:15</div>
<div class="t" style="left:172.34px;top:498.18px;font:400 12.61px/12.61px 'Liberation Sans',sans-serif;letter-spacing:0.200px;color:#516381;">October 27, 2025</div>
<div class="t" style="left:251.66px;top:529.30px;font:400 15.65px/15.65px 'Liberation Sans',sans-serif;letter-spacing:-0.088px;color:#1D2A3E;">Oct 27, 2025 @ 06:57:29.188 - Oct 27, 2025 @ 06:58:29.188 (interval: Auto - second)</div>
<div class="t" style="left:136.65px;top:579.59px;font:600 17.54px/17.54px 'Liberation Sans',sans-serif;letter-spacing:0.257px;color:#1750BA;">Documents (507)</div>
<div class="t" style="left:309.95px;top:579.59px;font:600 17.54px/17.54px 'Liberation Sans',sans-serif;letter-spacing:0.143px;color:#111C2C;">Patterns</div>
<div class="t" style="left:409.94px;top:579.67px;font:600 17.68px/17.68px 'Liberation Sans',sans-serif;letter-spacing:-0.133px;color:#111C2C;">Field statistics</div>
<div class="t" style="left:675.82px;top:578.58px;font:500 16.38px/16.38px 'Liberation Sans',sans-serif;letter-spacing:-0.060px;color:#111C2C;-webkit-text-stroke:0.22px currentColor;">Sort fields</div>
<div class="t" style="left:764.13px;top:580.18px;font:500 14.49px/14.49px 'Liberation Sans',sans-serif;letter-spacing:0.000px;color:#111C2C;-webkit-text-stroke:0.22px currentColor;">1</div>
<div class="t" style="left:161.11px;top:619.73px;font:600 14.78px/14.78px 'Liberation Sans',sans-serif;letter-spacing:0.067px;color:#111C2C;">Actions</div>
<div class="t" style="left:249.01px;top:619.73px;font:600 14.78px/14.78px 'Liberation Sans',sans-serif;letter-spacing:0.244px;color:#111C2C;">@timestamp</div>
<div class="t" style="left:508.22px;top:619.06px;font:600 14.64px/14.64px 'Liberation Sans',sans-serif;letter-spacing:0.133px;color:#111C2C;">Summary</div>
<div class="t" style="left:989.38px;top:82.75px;font:700 20.29px/20.29px 'Liberation Sans',sans-serif;letter-spacing:-0.171px;color:#07101F;">Document</div>
<div class="t" style="left:1174.92px;top:84.72px;font:400 17.97px/17.97px 'Liberation Sans',sans-serif;letter-spacing:0.000px;color:#1750BA;">1</div>
<div class="t" style="left:1192.90px;top:84.36px;font:400 18.41px/18.41px 'Liberation Sans',sans-serif;letter-spacing:1.000px;color:#111C2C;">of</div>
<div class="t" style="left:1218.92px;top:84.72px;font:400 17.97px/17.97px 'Liberation Sans',sans-serif;letter-spacing:1.500px;color:#111C2C;">500</div>
<div class="t" style="left:990.56px;top:128.82px;font:400 17.39px/17.39px 'Liberation Sans',sans-serif;letter-spacing:0.571px;color:#111C2C;">Actions:</div>
<div class="t" style="left:1094.87px;top:127.99px;font:500 18.84px/18.84px 'Liberation Sans',sans-serif;letter-spacing:-0.211px;color:#1750BA;-webkit-text-stroke:0.22px currentColor;">View single document</div>
<div class="t" style="left:1314.87px;top:127.99px;font:500 18.84px/18.84px 'Liberation Sans',sans-serif;letter-spacing:-0.160px;color:#1750BA;-webkit-text-stroke:0.22px currentColor;">View surrounding documents</div>
<div class="t" style="left:994.04px;top:208.85px;font:600 15.94px/15.94px 'Liberation Sans',sans-serif;letter-spacing:-0.636px;color:#1750BA;">Log overview</div>
<div class="t" style="left:1114.44px;top:208.85px;font:600 15.40px/15.40px 'Liberation Sans',sans-serif;letter-spacing:-0.200px;color:#111C2C;">Table</div>
<div class="t" style="left:1177.44px;top:208.85px;font:600 15.20px/15.20px 'Liberation Sans',sans-serif;letter-spacing:-0.333px;color:#111C2C;">JSON</div>
<div class="t" style="left:1023.78px;top:259.75px;font:700 20.29px/20.29px 'Liberation Sans',sans-serif;letter-spacing:-0.112px;color:#111C2C;">Content breakdown</div>
<div class="t" style="left:999.52px;top:309.39px;font:400 16.30px/16.30px 'Liberation Sans',sans-serif;letter-spacing:-0.583px;color:#3A5378;">message</div>
<div class="t" style="left:1149.55px;top:308.07px;font:400 15.80px/15.80px 'Liberation Sans',sans-serif;letter-spacing:-0.157px;color:#1750BA;">Parse content in Streams</div>
<div class="t" style="left:1353.40px;top:308.19px;font:500 15.07px/15.07px 'Liberation Sans',sans-serif;letter-spacing:0.323px;color:#111C2C;-webkit-text-stroke:0.22px currentColor;">Oct 27, 2025 @ 06:58:28.653</div>
<div class="t" style="left:1024.35px;top:489.86px;font:700 20.00px/20.00px 'Liberation Sans',sans-serif;letter-spacing:0.040px;color:#111C2C;">Stream</div>
<div class="t" style="left:999.66px;top:535.90px;font:400 15.65px/15.65px 'Liberation Sans',sans-serif;letter-spacing:0.286px;color:#1750BA;">logs-custom-app</div>
<div class="t" style="left:1083.52px;top:609.92px;font:700 17.97px/17.97px 'Liberation Sans',sans-serif;letter-spacing:-0.389px;color:#111C2C;">What's this message?</div>
<div class="t" style="left:1082.54px;top:636.17px;font:400 17.68px/17.68px 'Liberation Sans',sans-serif;letter-spacing:0.268px;color:#516381;">Get helpful insights from our Elastic AI Assistant.</div>
<div class="t" style="left:1082.52px;top:721.92px;font:700 17.97px/17.97px 'Liberation Sans',sans-serif;letter-spacing:-0.429px;color:#111C2C;">How do I find similar log messages?</div>
<div class="t" style="left:1082.54px;top:748.17px;font:400 17.68px/17.68px 'Liberation Sans',sans-serif;letter-spacing:0.268px;color:#516381;">Get helpful insights from our Elastic AI Assistant.</div>
<div class="t" style="left:248.50px;top:651.06px;font:400 14.65px/23.4px 'Liberation Mono',monospace;letter-spacing:0.000px;color:#111C2C;-webkit-text-stroke:0.25px currentColor;">Oct 27, 2025 @ 06:58:28.653</div>
<div class="t" style="left:507.40px;top:650.46px;font:400 14.65px/23.4px 'Liberation Mono',monospace;letter-spacing:0.000px;color:#111C2C;-webkit-text-stroke:0.25px currentColor;">2025-10-27T05:58:23.653526Z [<span class="mk">INFO</span>]<br>notification_service - OPTIONS /api/v1/auth/login<br>from 196.128.61.139 - Status: 200 - Response time:<br>548ms - Request ID: req_34581991 - User: user_3878<br>- Session: sess_822861</div>
<div class="t" style="left:248.50px;top:777.86px;font:400 14.65px/23.4px 'Liberation Mono',monospace;letter-spacing:0.000px;color:#111C2C;-webkit-text-stroke:0.25px currentColor;">Oct 27, 2025 @ 06:58:28.540</div>
<div class="t" style="left:508.20px;top:778.04px;font:400 14.65px/23.3px 'Liberation Mono',monospace;letter-spacing:0.000px;color:#111C2C;-webkit-text-stroke:0.25px currentColor;">2025-10-27T05:58:18.540671Z [<span class="mk">INFO</span>] user_manager -<br>PUT /api/v1/users from 205.158.178.240 - Status:<br>201 - Response time: 192ms - Request ID:<br>req_95164775 - User: user_4499 - Session:<br>sess_361317</div>
<div class="t" style="left:1009.20px;top:350.61px;font:400 14.65px/19.55px 'Liberation Mono',monospace;letter-spacing:0.000px;color:#111C2C;-webkit-text-stroke:0.25px currentColor;">2025-10-27T05:58:23.653526Z [INFO] notification_service -<br>OPTIONS /api/v1/auth/login from 196.128.61.139 - Status:<br>200 - Response time: 548ms - Request ID: req_34581991 -<br>User: user_3878 - Session: sess_822861</div>
</body></html>
